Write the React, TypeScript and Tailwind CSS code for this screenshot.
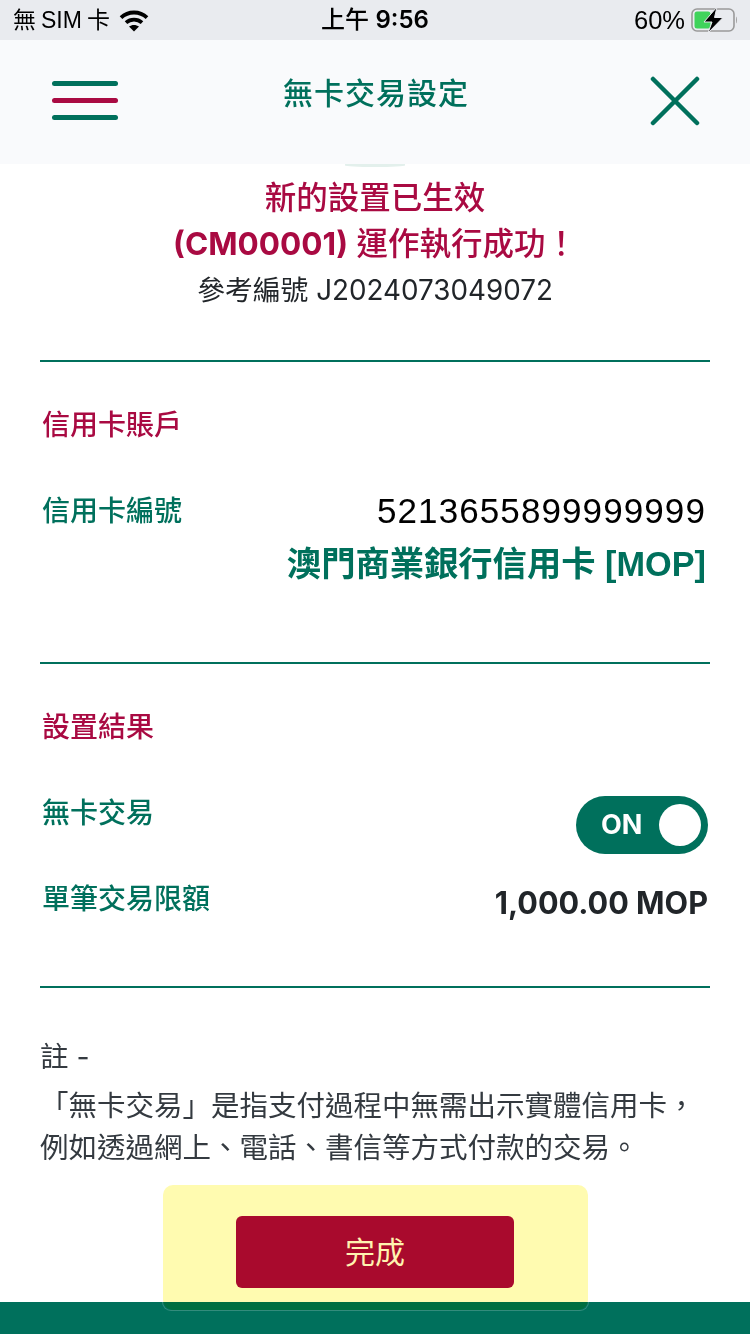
const FONT = "font-['Inter','Noto_Sans_CJK_TC',sans-serif]";
const HELV = "font-['Liberation_Sans','Noto_Sans_CJK_TC',sans-serif]";

function Wifi() {
  return (
    <svg width="30" height="23" viewBox="0 0 30 23" fill="none" stroke="#000" strokeWidth="3.8">
      <path d="M2 8.6C9.2 1.8 20.8 1.8 28 8.6" />
      <path d="M7 13.6C11.6 9.6 18.4 9.6 23 13.6" />
      <path d="M15 22.5L10 17.6C12.8 15.4 17.2 15.4 20 17.6Z" fill="#000" stroke="none" />
    </svg>
  );
}

function Battery() {
  return (
    <svg width="46" height="26" viewBox="0 0 46 26" fill="none">
      <rect x="1" y="2" width="42" height="22" rx="5" stroke="#9a9a9a" strokeWidth="1.6" />
      <rect x="3.5" y="4.5" width="16" height="17" rx="2.5" fill="#3fd35b" />
      <path d="M45 9.5c1.2.6 1.2 6.4 0 7z" fill="#9a9a9a" />
      <path d="M26 0L13 15h8L17 26 32 10.5h-8.500z" fill="#000" stroke="#e9ebef" strokeWidth="1" />
    </svg>
  );
}

function Row({ label, children }: { label: string; children: React.ReactNode }) {
  return (
    <div className="flex items-start justify-between">
      <span className="text-[28px] leading-[36px] font-medium text-[#00705c]">{label}</span>
      {children}
    </div>
  );
}

export default function App() {
  return (
    <div className={`relative h-[1334px] w-[750px] overflow-hidden bg-white ${FONT}`}>
      {/* status bar */}
      <div className={`flex h-10 items-center bg-[#e9ebef] px-[13px] text-black ${HELV}`}>
        <div className="flex flex-1 items-center text-[23px]">
          <div className="flex gap-[5px]">
            <span>無</span>
            <span>SIM</span>
            <span>卡</span>
          </div>
          <span className="ml-[9px]">
            <Wifi />
          </span>
        </div>
        <span className={`text-[24px] font-medium ${FONT}`}>
          上午 <span className="font-semibold">9:56</span>
        </span>
        <div className="flex flex-1 items-center justify-end gap-[6px] text-[25.5px]">
          <span>60%</span>
          <Battery />
        </div>
      </div>

      {/* header */}
      <header className="flex h-[124px] items-start bg-[#f9fafc] pl-[52px] pr-[50px]">
        <div className="flex-1">
          <div className="mt-[41px] flex w-[66px] flex-col gap-[12px]">
            <div className="h-[5px] rounded-full bg-[#00705c]" />
            <div className="h-[5px] rounded-full bg-[#a90a42]" />
            <div className="h-[5px] rounded-full bg-[#00705c]" />
          </div>
        </div>
        <h1 className="mt-[33px] text-[30px] leading-[40px] font-medium tracking-[1px] text-[#00705c]">無卡交易設定</h1>
        <div className="flex flex-1 justify-end">
          <svg className="mt-[36px]" width="50" height="50" viewBox="0 0 50 50" fill="none" stroke="#00705c" strokeWidth="4.5" strokeLinecap="round">
            <path d="M3 3L47 47M47 3L3 47" />
          </svg>
        </div>
      </header>

      <main className="px-10">
        <div className="mx-auto h-[3px] w-[60px] rounded-b-[50%] bg-[#e3f0ec]" />
        <div className="flex flex-col items-center pt-[7px]">
          <p className="text-[31.5px] leading-[47px] font-medium text-[#a90a42]">新的設置已生效</p>
          <p className="text-[31.5px] leading-[46px] font-medium text-[#a90a42]">
            <span className="font-bold">(CM00001)</span> 運作執行成功！
          </p>
          <p className="text-[27.8px] leading-[46px] text-[#212529]">參考編號 J2024073049072</p>
        </div>

        <section className="mt-[47px] h-[302px] border-t-2 border-[#00705c] px-[2px] pt-[45px]">
          <h2 className="text-[28px] leading-[36px] font-medium text-[#a90a42]">信用卡賬戶</h2>
          <div className="mt-[50px]">
            <Row label="信用卡編號">
              <div className="pr-[2px] text-right">
                <p className={`text-[35px] leading-[36px] tracking-[1.1px] text-black ${HELV}`}>5213655899999999</p>
                <p className={`mt-[15px] text-[34.3px] leading-[40px] font-bold text-[#00705c] ${HELV}`}>澳門商業銀行信用卡 [MOP]</p>
              </div>
            </Row>
          </div>
        </section>

        <section className="h-[324px] border-t-2 border-[#00705c] pl-[2px] pt-[45px]">
          <h2 className="text-[28px] leading-[36px] font-medium text-[#a90a42]">設置結果</h2>
          <div className="mt-[50px] flex flex-col gap-[27px]">
            <Row label="無卡交易">
              <div className="mr-[2px] mt-[1px] flex h-[58px] w-[132px] items-center justify-between rounded-full bg-[#00705c] pl-[25px] pr-[7px] text-[27px] font-bold text-white">
                <span>ON</span>
                <span className="h-[42px] w-[42px] rounded-full bg-white" />
              </div>
            </Row>
            <Row label="單筆交易限額">
              <span className="mr-[2px] mt-[4px] text-[30.6px] leading-[36px] font-bold text-[#212529]">1,000.00 MOP</span>
            </Row>
          </div>
        </section>

        <section className="border-t-2 border-[#00705c] pt-[46px] text-[28.5px] text-[#343a40]">
          <p className="leading-[46px]">註 -</p>
          <div className="mt-[5px] leading-[42px]">
            <p>「無卡交易」是指支付過程中無需出示實體信用卡，</p>
            <p>例如透過網上、電話、書信等方式付款的交易。</p>
          </div>
        </section>
      </main>

      <div className="absolute bottom-0 left-0 h-8 w-full bg-[#00705c]" />
      {/* floating action panel */}
      <div className="absolute left-[163px] top-[1185px] h-[125px] w-[425px] rounded-[10px] bg-[#fffbb0] mix-blend-multiply" />
      <div className="absolute left-[162px] top-[1302px] h-[9px] w-[427px] rounded-b-[11px] border-x border-b border-white/20" />
      <button className="absolute left-[236px] top-[1216px] flex h-[72px] w-[278px] items-center justify-center rounded-[6px] bg-[#a90a2d] text-[30px] text-[#fff3b0]">完成</button>
    </div>
  );
}
